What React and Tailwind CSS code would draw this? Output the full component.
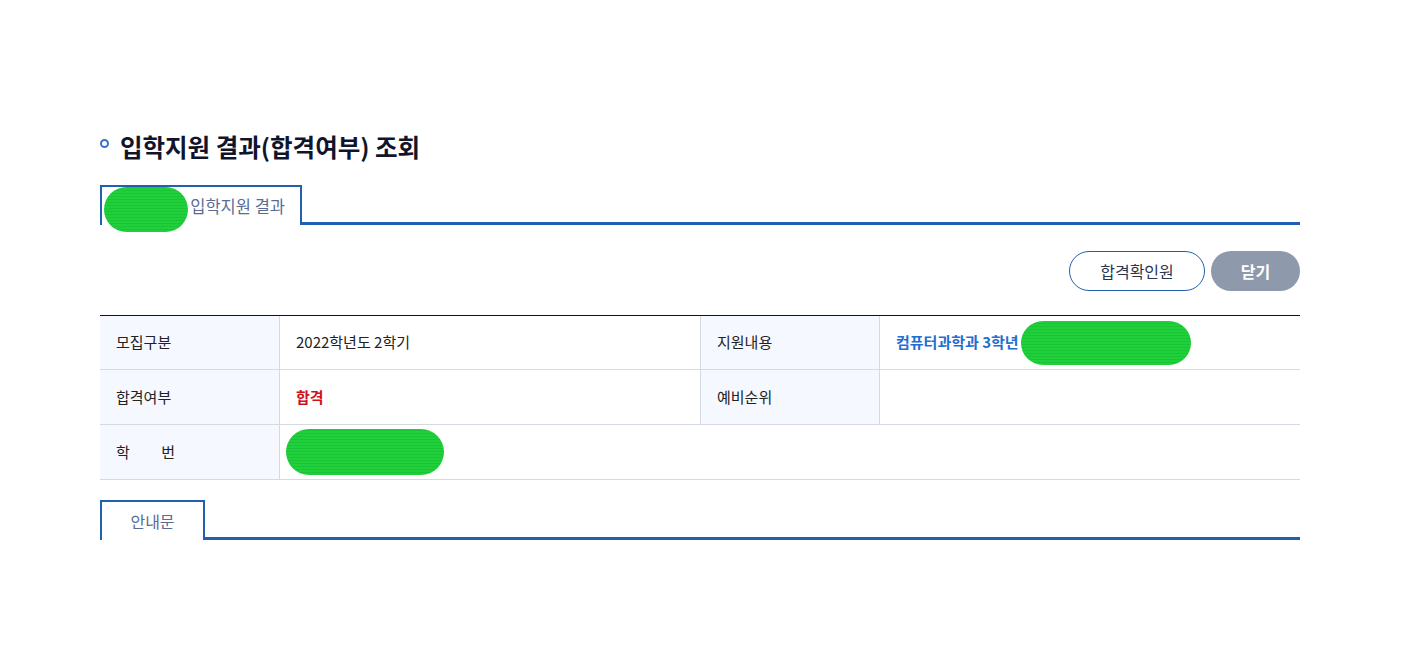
const font = { fontFamily: '"Noto Sans CJK KR", "Noto Sans", sans-serif' };

function Redact({ className }) {
  return (
    <span
      className={
        "inline-block rounded-full bg-[#1fd03b] bg-[repeating-linear-gradient(0deg,#1fd03b_0px,#1fd03b_2px,#17b832_3px)] " +
        className
      }
    />
  );
}

function Label({ children }) {
  return (
    <div className="flex items-center border-r border-[#d5d9e1] bg-[#f5f8fe] pl-4 text-[15px] text-[#222]">
      {children}
    </div>
  );
}

export default function App() {
  return (
    <div className="min-h-[664px] w-full bg-white" style={font}>
      <div className="w-[1200px] pt-[131px]" style={{ marginLeft: 100 }}>
        <h2 className="flex items-center gap-[11px] text-[24.5px] font-bold leading-[32px] text-[#10152b]">
          <span className="mb-[8px] h-[9px] w-[9px] rounded-full border-2 border-[#3b6fd0]" />
          입학지원 결과(합격여부) 조회
        </h2>

        <div className="mt-[22px]">
          <div className="flex items-end">
            <div className="relative flex h-[40px] w-[202px] items-center justify-end border-2 border-b-0 border-[#2160b0] bg-white pr-[15px] text-[16.5px] text-[#5a6c94]">
              <Redact className="absolute left-[2px] top-[0px] h-[45px] w-[84px]" />
              <span className="relative">입학지원 결과</span>
            </div>
            <div className="h-[3px] flex-1 bg-[#2160b0]" />
          </div>
        </div>

        <div className="mt-[26px] flex justify-end gap-[6px]">
          <button className="h-[40px] w-[136px] rounded-full border border-[#2160b0] bg-white text-[16px] text-[#2b3550]">
            합격확인원
          </button>
          <button className="h-[40px] w-[89px] rounded-full bg-[#8e99ab] text-[16px] font-bold text-white">
            닫기
          </button>
        </div>

        <div className="mt-[24px] border-t border-[#111]">
          <div className="grid grid-cols-[180px_420px_180px_420px]">
            <Label>모집구분</Label>
            <div className="flex h-[53px] items-center pl-4 text-[15px] text-[#222]">2022학년도 2학기</div>
            <div className="flex border-l border-[#d5d9e1]">
              <div className="flex flex-1 items-center border-r border-[#d5d9e1] bg-[#f5f8fe] pl-4 text-[15px] text-[#222]">
                지원내용
              </div>
            </div>
            <div className="flex items-center pl-4 text-[15px] font-bold text-[#1f6fd0]">
              컴퓨터과학과 3학년
              <Redact className="ml-[2px] h-[44px] w-[170px]" />
            </div>

            <div className="col-span-4 h-px bg-[#d5d9e1]" />

            <Label>합격여부</Label>
            <div className="flex h-[54px] items-center pl-4 text-[15px] font-bold text-[#d0101c]">합격</div>
            <div className="flex border-l border-[#d5d9e1]">
              <div className="flex flex-1 items-center border-r border-[#d5d9e1] bg-[#f5f8fe] pl-4 text-[15px] text-[#222]">
                예비순위
              </div>
            </div>
            <div />

            <div className="col-span-4 h-px bg-[#d5d9e1]" />

            <Label>
              <span className="flex w-[59px] justify-between">
                <span>학</span>
                <span>번</span>
              </span>
            </Label>
            <div className="col-span-3 flex h-[54px] items-center pl-[6px]">
              <Redact className="h-[46px] w-[158px]" />
            </div>

            <div className="col-span-4 h-px bg-[#d5d9e1]" />
          </div>
        </div>

        <div className="mt-[20px]">
          <div className="flex items-end">
            <div className="flex h-[40px] w-[105px] items-center justify-center border-2 border-b-0 border-[#2160b0] bg-white text-[16px] text-[#5a6c94]">
              안내문
            </div>
            <div className="h-[3px] flex-1 bg-[#2160b0]" />
          </div>
        </div>
      </div>
    </div>
  );
}
